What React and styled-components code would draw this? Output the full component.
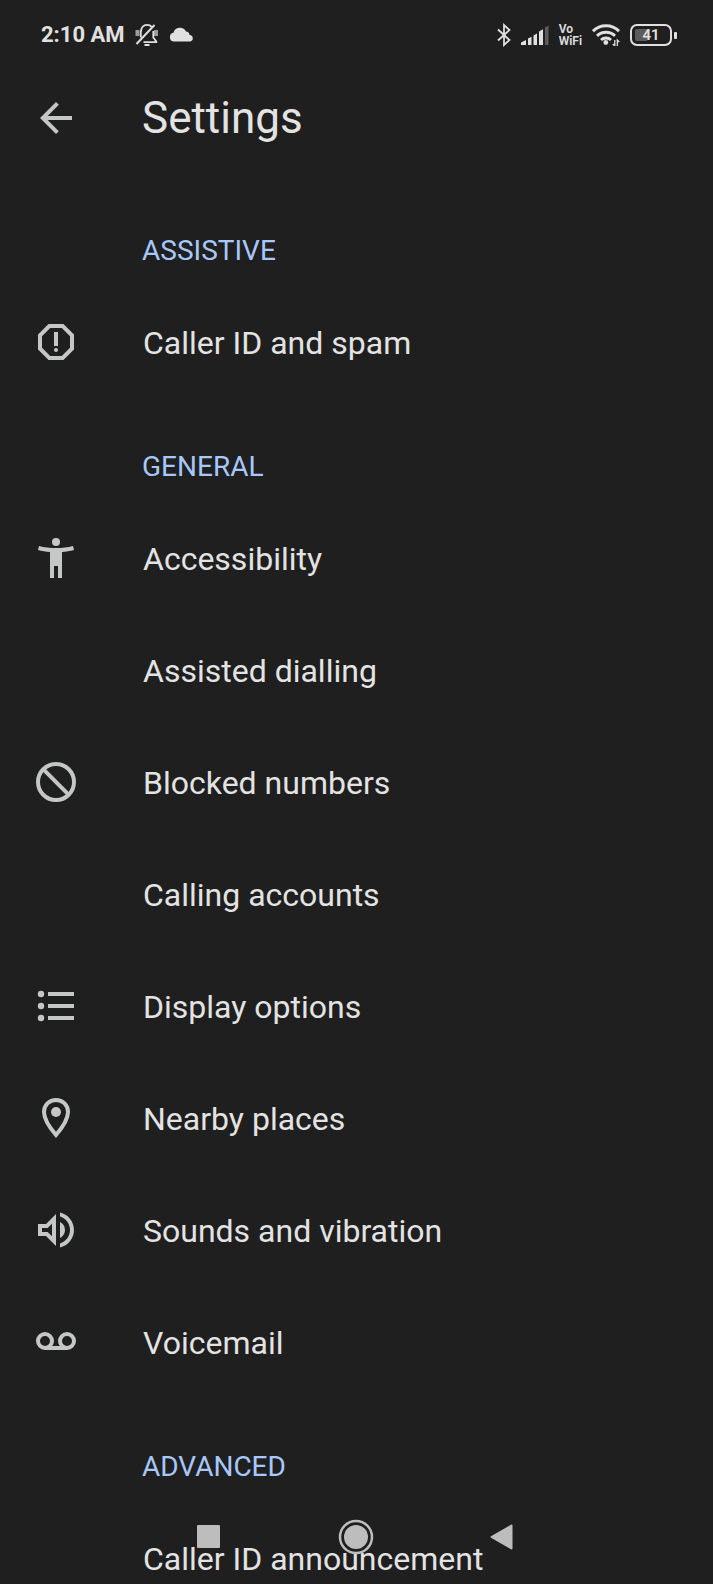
import React from 'react'
import styled, { createGlobalStyle } from 'styled-components'
import {
	MdArrowBack,
	MdOutlineReport,
	MdOutlineVolumeUp,
} from 'react-icons/md'

const GlobalStyle = createGlobalStyle`
	* {
		box-sizing: border-box;
	}
	body {
		margin: 0;
		background: #1f1f1f;
		font-family: Roboto, "Liberation Sans", sans-serif;
	}
`;

const Screen = styled.div`
	height: 100vh;
	display: flex;
	flex-direction: column;
	overflow: hidden;
	background: #1f1f1f;
	color: #e3e3e3;
`;

const StatusBar = styled.div`
	flex: none;
	height: 70px;
	padding: 0 36px 0 41px;
	display: flex;
	align-items: center;
	justify-content: space-between;
	color: #e0e0e0;
`;

const StatusGroup = styled.div`
	display: flex;
	align-items: center;
	gap: 10px;
	svg {
		display: block;
	}
`;

const Clock = styled.span`
	font-size: 22px;
	line-height: 28px;
	font-weight: 700;
`;

const Carrier = styled.span`
	display: flex;
	flex-direction: column;
	font-size: 12px;
	line-height: 12px;
	font-weight: 600;
`;

const Battery = styled.div`
	display: flex;
	align-items: center;
	gap: 2px;
`;

const BatteryBody = styled.div`
	width: 42px;
	height: 22px;
	padding: 3px;
	border: 2px solid #e0e0e0;
	border-radius: 7px;
	display: grid;
	align-items: center;
`;

const BatteryLevel = styled.span`
	grid-area: 1 / 1;
	width: ${props => props.$level}%;
	height: 12px;
	border-radius: 2px;
	background: #5c5c5c;
`;

const BatteryText = styled.span`
	grid-area: 1 / 1;
	text-align: center;
	font-size: 15px;
	line-height: 12px;
	font-weight: 600;
`;

const BatteryTip = styled.span`
	width: 3px;
	height: 7px;
	border-radius: 1px;
	background: #e0e0e0;
`;

const AppBar = styled.header`
	flex: none;
	height: 112px;
	padding: 0 32px 16px;
	display: flex;
	align-items: center;
	gap: 62px;
`;

const BackButton = styled.button`
	width: 48px;
	height: 48px;
	padding: 0;
	border: none;
	background: none;
	color: #c4c7c5;
	cursor: pointer;
	svg {
		display: block;
	}
`;

const Title = styled.h1`
	margin: 0;
	font-size: 44px;
	line-height: 56px;
	font-weight: 400;
`;

const Content = styled.main`
	flex: 1;
	min-height: 0;
	overflow-y: auto;
	scrollbar-width: none;
`;

const SectionTitle = styled.h2`
	margin: 0;
	height: 104px;
	padding: 51px 32px 0 142px;
	font-size: 28px;
	line-height: 36px;
	font-weight: 400;
	text-transform: uppercase;
	color: #a8c7fa;
`;

const List = styled.ul`
	margin: 0;
	padding: 0;
	list-style: none;
`;

const RowLink = styled.a`
	height: 112px;
	padding: 0 32px;
	display: flex;
	align-items: center;
	gap: 63px;
	font-size: 32px;
	line-height: 40px;
	color: #e3e3e3;
	text-decoration: none;
`;

const IconSlot = styled.span`
	flex: none;
	width: 48px;
	height: 48px;
	color: #c4c7c5;
	svg {
		display: block;
	}
`;

const RowLabel = styled.span`
	padding-top: 2px;
`;

const NavBar = styled.nav`
	position: fixed;
	left: 0;
	right: 0;
	bottom: 0;
	height: 94px;
	padding-right: 2px;
	display: flex;
	justify-content: center;
`;

const NavButton = styled.button`
	width: 147px;
	padding: 0;
	border: none;
	background: none;
	display: flex;
	align-items: center;
	justify-content: center;
	cursor: pointer;
`;

function AccessibilityIcon() {
	return (
		<svg width="48" height="48" viewBox="0 0 24 24" fill="currentColor">
			<path d="M20.5 6c-2.61.7-5.67 1-8.5 1s-5.89-.3-8.5-1L3 8c1.86.5 4 .83 6 1v13h2v-6h2v6h2V9c2-.17 4.14-.5 6-1l-.5-2z" />
			<circle cx="12" cy="4" r="2" />
		</svg>
	)
}

function BlockIcon() {
	return (
		<svg width="48" height="48" viewBox="0 0 24 24" fill="none" stroke="currentColor" strokeWidth="2">
			<circle cx="12" cy="12" r="9" />
			<path d="M5.6 5.6L18.4 18.4" />
		</svg>
	)
}

function ListIcon() {
	return (
		<svg width="48" height="48" viewBox="0 0 24 24" fill="currentColor">
			<circle cx="4.5" cy="6" r="1.6" />
			<circle cx="4.5" cy="12" r="1.6" />
			<circle cx="4.5" cy="18" r="1.6" />
			<path d="M8 5h13v2H8zM8 11h13v2H8zM8 17h13v2H8z" />
		</svg>
	)
}

function PlaceIcon() {
	return (
		<svg width="48" height="48" viewBox="0 0 24 24" fill="none" stroke="currentColor" strokeWidth="2">
			<path d="M12 3C8.6 3 6 5.6 6 9c0 3.5 3 8 6 11.5C15 17 18 12.5 18 9c0-3.4-2.6-6-6-6z" />
			<circle cx="12" cy="9" r="2.5" fill="currentColor" stroke="none" />
		</svg>
	)
}

function VoicemailIcon() {
	return (
		<svg width="48" height="48" viewBox="0 0 24 24" fill="none" stroke="currentColor" strokeWidth="2">
			<circle cx="6.5" cy="11.5" r="3.5" />
			<circle cx="17.5" cy="11.5" r="3.5" />
			<path d="M6.5 15h11" />
		</svg>
	)
}

function MutedBellIcon() {
	return (
		<svg width="24" height="24" viewBox="0 0 24 24" fill="none" stroke="#e0e0e0" strokeWidth="1.8">
			<path d="M2.5 7v6M21 7v6" strokeWidth="4" stroke="#9c9c9c" />
			<path d="M5.8 14.5V9.5C5.8 4.5 8.5 1.8 12 1.8c2 0 3.5.6 4.8 2M18.3 8v6.5l3 4v.7H8.5" />
			<path d="M1.5 21L19.5 2" strokeWidth="2" />
			<path d="M9.5 22h5" strokeWidth="2" />
		</svg>
	)
}

function CloudIcon() {
	return (
		<svg width="25" height="16" viewBox="0 0 25 16" fill="#e0e0e0">
			<path d="M5 14.5a4.4 4.4 0 0 1-.6-8.700A6.800 6.800 0 0 1 17 4.400a4 4 0 0 1 3.600 3.500A3.400 3.400 0 0 1 21.500 14.500z" />
		</svg>
	)
}

function BluetoothIcon() {
	return (
		<svg width="14" height="24" viewBox="0 0 14 24" fill="none" stroke="#e0e0e0" strokeWidth="1.8">
			<path d="M1 6.5L12.5 17 7 22V2l5.5 5L1 17.5" />
		</svg>
	)
}

function SignalIcon() {
	return (
		<svg width="28" height="20" viewBox="0 0 28 20" fill="#e0e0e0">
			<path d="M0 20v-2.5L5 15v5zM7 20v-6.5l3.5-1.800V20zM12.5 20v-9.500L16 8.500V20zM18 20V6.500l4-2.200V20z" />
			<path d="M24 20V2.500L27.500.5V20z" fill="#5c5c5c" />
		</svg>
	)
}

function WifiIcon() {
	return (
		<svg width="28" height="22" viewBox="0 0 28 22" fill="none" stroke="#e0e0e0" strokeWidth="3">
			<path d="M1 7.2a18.5 18.5 0 0 1 26 0" />
			<path d="M5 11.8a13 13 0 0 1 18 0" />
			<path d="M9 16a7.5 7.5 0 0 1 10 0" />
			<circle cx="13.8" cy="18.5" r="2.4" fill="#e0e0e0" stroke="none" />
			<path d="M22.8 16v6l-2-2M25.3 22v-6l2 2" strokeWidth="1.3" />
		</svg>
	)
}

const sections = [
	{
		title: 'Assistive',
		items: [{ label: 'Caller ID and spam', icon: <MdOutlineReport size={48} /> }],
	},
	{
		title: 'General',
		items: [
			{ label: 'Accessibility', icon: <AccessibilityIcon /> },
			{ label: 'Assisted dialling' },
			{ label: 'Blocked numbers', icon: <BlockIcon /> },
			{ label: 'Calling accounts' },
			{ label: 'Display options', icon: <ListIcon /> },
			{ label: 'Nearby places', icon: <PlaceIcon /> },
			{ label: 'Sounds and vibration', icon: <MdOutlineVolumeUp size={48} /> },
			{ label: 'Voicemail', icon: <VoicemailIcon /> },
		],
	},
	{
		title: 'Advanced',
		items: [{ label: 'Caller ID announcement' }],
	},
]

export default function App() {
	return (
		<Screen>
			<GlobalStyle />
			<StatusBar>
				<StatusGroup>
					<Clock>2:10 AM</Clock>
					<MutedBellIcon />
					<CloudIcon />
				</StatusGroup>
				<StatusGroup>
					<BluetoothIcon />
					<SignalIcon />
					<Carrier>
						<span>Vo</span>
						<span>WiFi</span>
					</Carrier>
					<WifiIcon />
					<Battery>
						<BatteryBody>
							<BatteryLevel $level={41} />
							<BatteryText>41</BatteryText>
						</BatteryBody>
						<BatteryTip />
					</Battery>
				</StatusGroup>
			</StatusBar>
			<AppBar>
				<BackButton aria-label="Back">
					<MdArrowBack size={48} />
				</BackButton>
				<Title>Settings</Title>
			</AppBar>
			<Content>
				{sections.map(section => (
					<section key={section.title}>
						<SectionTitle>{section.title}</SectionTitle>
						<List>
							{section.items.map(item => (
								<li key={item.label}>
									<RowLink href="#">
										<IconSlot>{item.icon}</IconSlot>
										<RowLabel>{item.label}</RowLabel>
									</RowLink>
								</li>
							))}
						</List>
					</section>
				))}
			</Content>
			<NavBar>
				<NavButton aria-label="Recent apps">
					<svg width="24" height="24" viewBox="0 0 24 24" fill="#bdbdbd">
						<rect x="0" y="0" width="23" height="23" rx="1" />
					</svg>
				</NavButton>
				<NavButton aria-label="Home">
					<svg width="36" height="36" viewBox="0 0 36 36">
						<circle cx="18" cy="18" r="16" fill="#1f1f1f" stroke="#bdbdbd" strokeWidth="2.5" />
						<circle cx="18" cy="18" r="12" fill="#bdbdbd" />
					</svg>
				</NavButton>
				<NavButton aria-label="Back">
					<svg width="28" height="26" viewBox="0 0 28 26" fill="#bdbdbd" stroke="#bdbdbd" strokeWidth="2" strokeLinejoin="round">
						<path d="M2.5 13L22.5 1.5v23z" />
					</svg>
				</NavButton>
			</NavBar>
		</Screen>
	)
}
